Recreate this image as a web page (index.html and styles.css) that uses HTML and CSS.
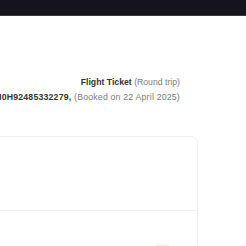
FILE: index.html
```html
<!DOCTYPE html>
<html>
<head>
<meta charset="utf-8">
<link rel="stylesheet" href="styles.css">
</head>
<body>
<header class="topbar"></header>
<main class="page">
  <div class="ticket-head">
    <div class="line"><span class="strong">Flight Ticket</span> <span class="muted">(Round trip)</span></div>
    <div class="line line-wide"><span class="strong">PNR: 7H0H92485332279,</span> <span class="muted">(Booked on 22 April 2025)</span></div>
  </div>
  <section class="card">
    <div class="card-top"></div>
    <div class="card-body"><span class="chip"></span></div>
  </section>
</main>
</body>
</html>
```
FILE: styles.css
```css
html, body { margin: 0; padding: 0; background: #fff; overflow: hidden; }
body { width: 246px; height: 246px; font-family: "Liberation Sans", Arial, sans-serif; }
.topbar { height: 15px; background: #15131c; border-bottom: 1px solid #3a3a3e; }
.page { display: flex; flex-direction: column; align-items: flex-end; padding-right: 48px; }
.ticket-head { margin-top: 60px; margin-right: 18px; display: flex; flex-direction: column; align-items: flex-end; gap: 2px; white-space: nowrap; }
.line { font-size: 8.7px; line-height: 13px; color: #333; }
.line-wide { letter-spacing: 0.22px; }
.strong { font-weight: bold; color: #333; }
.muted { color: #7c7c7c; }
.card { margin-top: 32px; width: 300px; border: 1px solid #eeeeee; border-radius: 7px; box-sizing: border-box; }
.card-top { height: 73px; border-bottom: 1px solid #f0f0f0; }
.card-body { height: 80px; position: relative; }
.chip { position: absolute; right: 28px; top: 33px; width: 14px; height: 4px; background: #fdf6dc; border-radius: 2px; }
```
